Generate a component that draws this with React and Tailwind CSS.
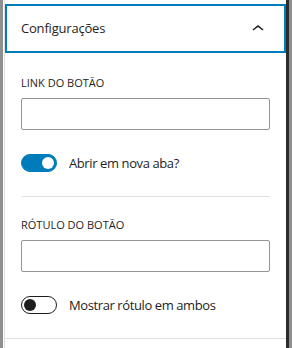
import { useState } from 'react';

function Toggle({ checked, onChange, label }) {
  return (
    <label className="flex items-center gap-3 cursor-pointer">
      <span
        onClick={() => onChange(!checked)}
        className={`relative inline-block h-[18px] w-[36px] shrink-0 rounded-full border ${
          checked ? 'border-[#007cba] bg-[#007cba]' : 'border-[#1e1e1e] bg-white'
        }`}
      >
        <span
          className={`absolute top-[2px] h-[12px] w-[12px] rounded-full ${
            checked ? 'left-[20px] bg-white' : 'left-[2px] bg-[#1e1e1e]'
          }`}
        />
      </span>
      <span className="text-[13px] leading-[18px] tracking-[-0.4px] text-[#1e1e1e]">{label}</span>
    </label>
  );
}

export default function App() {
  const [newTab, setNewTab] = useState(true);
  const [showBoth, setShowBoth] = useState(false);

  return (
    <div
      className="flex h-[348px] w-[292px] bg-white"
      style={{ fontFamily: '"Open Sans", "Noto Sans", sans-serif' }}
    >
      <div className="w-[3px] bg-[#8f8f8f]" />
      <div className="w-px bg-white" />
      <div className="flex flex-1 flex-col border-l border-[#e0e0e0]">
        <button className="mt-[4px] flex h-[49px] items-center justify-between px-4 text-left shadow-[inset_0_0_0_2px_#007cba]">
          <span className="text-[13px] font-medium tracking-[-0.2px] text-[#1e1e1e]">Configurações</span>
          <svg width="24" height="24" viewBox="0 0 24 24" className="fill-[#1e1e1e]">
            <path d="M6.5 12.4L12 8l5.5 4.4-.9 1.2L12 10l-4.6 3.6-.9-1.2z" />
          </svg>
        </button>

        <div className="border-b border-[#e0e0e0] px-4 pb-6">
          <div className="mt-[22px]">
            <p className="mb-2 text-[11px] font-medium uppercase leading-[15px] text-[#1e1e1e]">Link do botão</p>
            <input className="block h-[32px] w-full rounded-[2px] border border-[#949494] px-2 text-[13px] outline-none" />
          </div>
          <div className="mt-6">
            <Toggle checked={newTab} onChange={setNewTab} label="Abrir em nova aba?" />
          </div>
          <div className="mt-6 h-px bg-[#e0e0e0]" />
          <div className="mt-[20px]">
            <p className="mb-2 text-[11px] font-medium uppercase leading-[15px] text-[#1e1e1e]">Rótulo do botão</p>
            <input className="block h-[32px] w-full rounded-[2px] border border-[#949494] px-2 text-[13px] outline-none" />
          </div>
          <div className="mt-6">
            <Toggle checked={showBoth} onChange={setShowBoth} label="Mostrar rótulo em ambos" />
          </div>
        </div>
      </div>
      <div className="w-[3px] bg-[#2c2c2c]" />
      <div className="w-[3px] bg-[#8f8f8f]" />
    </div>
  );
}
